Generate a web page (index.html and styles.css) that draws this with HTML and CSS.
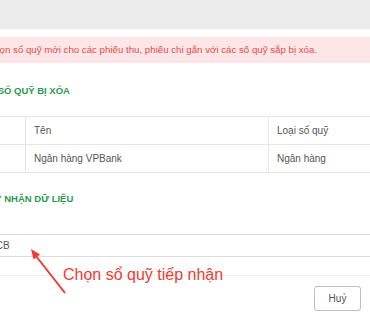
FILE: index.html
```html
<!DOCTYPE html>
<html lang="vi">
<head>
    <meta charset="UTF-8">
    <title>Xóa sổ quỹ</title>
    <meta name="viewport" content="width=device-width, initial-scale=1.0">
    <link rel="stylesheet" href="styles.css">
</head>
<body>
    <div class="topbar"></div>
    <div class="dialog">
        <div class="alert">Vui lòng chọn sổ quỹ mới cho các phiếu thu, phiếu chi gắn với các số quỹ sắp bị xóa.</div>

        <h3 class="section-title">DANH SÁCH SỐ QUỸ BỊ XÓA</h3>
        <table class="fund-table">
            <tr>
                <td class="col-no">STT</td>
                <td class="col-name">Tên</td>
                <td>Loại số quỹ</td>
            </tr>
            <tr>
                <td class="col-no">1</td>
                <td class="col-name">Ngân hàng VPBank</td>
                <td>Ngân hàng</td>
            </tr>
        </table>

        <h3 class="section-title section-title--second">CHỌN SỔ QUỸ NHẬN DỮ LIỆU</h3>
        <div class="picker">Ngân hàng ACB</div>

        <div class="dialog-footer">
            <button class="btn">Huỷ</button>
        </div>
    </div>

    <!-- annotation over the screenshot -->
    <svg class="note-arrow" width="370" height="320" viewBox="0 0 370 320">
        <line x1="65" y1="293" x2="36" y2="256" stroke="#f03b30" stroke-width="2"/>
        <polygon points="31,249 40,254.5 33.5,259.5" fill="#f03b30"/>
    </svg>
    <div class="note-text">Chọn sổ quỹ tiếp nhận</div>
</body>
</html>
```

FILE: styles.css
```css
body {
    margin: 0;
    width: 370px;
    height: 320px;
    overflow: hidden;
    position: relative;
    background: #fff;
    font-family: "Liberation Sans", Arial, sans-serif;
    color: #555;
}
.topbar {
    height: 29px;
    background: #ebebeb;
}
.dialog {
    margin-top: 8px;
    margin-left: -62px;
    width: 442px;
}
.alert {
    background: #fde6e7;
    color: #e64b4b;
    font-size: 9.7px;
    line-height: 26px;
    padding: 0 14px;
    white-space: nowrap;
}
.section-title {
    margin: 22px 0 0;
    font-size: 9.5px;
    line-height: 12px;
    font-weight: bold;
    color: #2a9a4c;
    white-space: nowrap;
}
.section-title--second {
    margin-top: 20px;
    margin-left: -4px;
}
.fund-table {
    margin-top: 19px;
    width: 100%;
    border-collapse: collapse;
    font-size: 10px;
}
.fund-table td {
    border-top: 1px solid #e6e6e6;
    border-bottom: 1px solid #e6e6e6;
    padding: 8px 8px;
    line-height: 11px;
    white-space: nowrap;
}
.fund-table .col-no {
    width: 71px;
    border-right: 1px solid #e6e6e6;
}
.fund-table .col-name {
    width: 226px;
    border-right: 1px solid #e6e6e6;
}
.picker {
    margin-top: 29px;
    border-top: 1px solid #dcdcdc;
    border-bottom: 1px solid #dcdcdc;
    font-size: 10px;
    line-height: 21px;
    white-space: nowrap;
}
.dialog-footer {
    margin-top: 18px;
    border-top: 1px solid #f0f0f0;
    padding: 10px 19px 0;
    display: flex;
    justify-content: flex-end;
}
.btn {
    width: 47px;
    height: 25px;
    background: #fff;
    border: 1px solid #bdbdbd;
    border-radius: 3px;
    font-family: "Liberation Sans", Arial, sans-serif;
    font-size: 10px;
    color: #555;
    padding: 0;
}
.note-arrow {
    position: absolute;
    left: 0;
    top: 0;
}
.note-text {
    position: absolute;
    left: 63px;
    top: 266px;
    font-size: 16px;
    line-height: 18px;
    color: #f03b30;
    white-space: nowrap;
}
```
